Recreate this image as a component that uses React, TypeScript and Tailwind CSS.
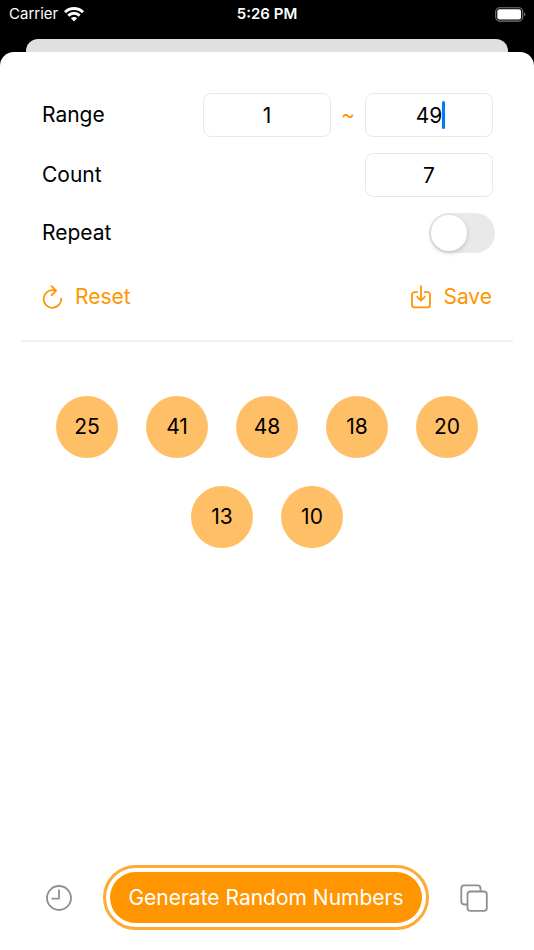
import { useState } from "react";

const INITIAL = [25, 41, 48, 18, 20, 13, 10];

const fieldClass =
  "h-11 w-32 rounded-lg border border-[#e8e8ea] bg-white text-center text-[21px] leading-7 text-black outline-none";

function WifiIcon() {
  return (
    <svg width="20" height="15" viewBox="0 0 20 15" fill="none" stroke="#fff" strokeWidth="2.9" aria-hidden="true">
      <path d="M1 5.2a12.8 12.8 0 0 1 18 0" />
      <path d="M4.3 8.6a8.1 8.1 0 0 1 11.4 0" />
      <path d="M10 14.5 6.9 11.3a4.4 4.4 0 0 1 6.2 0z" fill="#fff" stroke="none" />
    </svg>
  );
}

function BatteryIcon() {
  return (
    <svg width="31" height="15" viewBox="0 0 31 15" fill="none" aria-hidden="true">
      <rect x="0.7" y="0.7" width="27" height="13.4" rx="4" stroke="#7a7a7a" strokeWidth="1.1" />
      <rect x="2.3" y="2.3" width="23.8" height="10.2" rx="2.2" fill="#fff" />
      <path d="M29.2 5.2c1.7.7 1.7 3.7 0 4.4z" fill="#7a7a7a" />
    </svg>
  );
}

function ResetIcon() {
  return (
    <svg width="21" height="24" viewBox="0 0 21 24" fill="none" stroke="currentColor" strokeWidth="1.8" strokeLinecap="round" strokeLinejoin="round" aria-hidden="true">
      <path d="M19.2 13.6a8.8 8.8 0 1 1-8.8-8.400c1.200 0 2.300.1 3.200.4" />
      <path d="M9.600 1.200 14 5.600 9.600 10.300" />
    </svg>
  );
}

function SaveIcon() {
  return (
    <svg width="20" height="24" viewBox="0 0 20 24" fill="none" stroke="currentColor" strokeWidth="1.8" strokeLinecap="round" strokeLinejoin="round" aria-hidden="true">
      <path d="M6.2 7.1H3.6A2.6 2.6 0 0 0 1 9.7v10a2.6 2.6 0 0 0 2.6 2.6h12.8a2.6 2.6 0 0 0 2.6-2.6v-10a2.6 2.6 0 0 0-2.6-2.6h-2.6" />
      <path d="M10 1.2v14.2M6.2 11.8 10 15.6l3.8-3.8" />
    </svg>
  );
}

function ClockIcon() {
  return (
    <svg width="26" height="26" viewBox="0 0 26 26" fill="none" stroke="#8e8e93" strokeWidth="1.8" strokeLinecap="round" strokeLinejoin="round" aria-hidden="true">
      <circle cx="13" cy="13" r="12" />
      <path d="M13 5.200v8.400H6.200" />
    </svg>
  );
}

function CopyIcon() {
  return (
    <svg width="28" height="28" viewBox="0 0 28 28" fill="none" stroke="#8e8e93" strokeWidth="1.8" strokeLinejoin="round" aria-hidden="true">
      <path d="M7.5 20.5H4.2a2.9 2.9 0 0 1-2.900-2.900V4.200A2.900 2.900 0 0 1 4.200 1.300h13.400a2.900 2.900 0 0 1 2.900 2.900v3.300" />
      <rect x="7.5" y="7.5" width="19.3" height="19.3" rx="2.9" />
    </svg>
  );
}

export default function App() {
  const [min, setMin] = useState("1");
  const [max, setMax] = useState("49");
  const [count, setCount] = useState("7");
  const [repeat, setRepeat] = useState(false);
  const [numbers, setNumbers] = useState(INITIAL);

  const generate = () => {
    const low = Number(min);
    const high = Number(max);
    const total = Number(count);
    const pool = Array.from({ length: Math.max(0, high - low + 1) }, (_, i) => low + i);
    const picked: number[] = [];
    while (picked.length < total && pool.length > 0) {
      const i = Math.floor(Math.random() * pool.length);
      picked.push(pool[i]);
      if (!repeat) pool.splice(i, 1);
    }
    setNumbers(picked);
  };

  const reset = () => {
    setMin("1");
    setMax("49");
    setCount("7");
    setRepeat(false);
  };

  return (
    <div className="flex min-h-screen flex-col bg-black font-['Inter','Liberation_Sans',sans-serif] text-[21px] leading-7 text-black">
      <header className="grid h-[39px] grid-cols-3 items-start px-2 pt-1 text-[15px] leading-5 text-white">
        <div className="flex items-center gap-1.5 pl-px">
          <span>Carrier</span>
          <WifiIcon />
        </div>
        <div className="text-center font-semibold">5:26 PM</div>
        <div className="flex h-5 items-center justify-end">
          <BatteryIcon />
        </div>
      </header>
      <div className="mx-[26px] h-[13px] rounded-t-xl bg-[#e0e0e0]" />

      <main className="flex grow flex-col rounded-t-[14px] bg-white px-[21px] pt-[41px] pb-5">
        <section className="flex flex-col gap-4 pr-5 pl-[21px]">
          <div className="flex items-center justify-between">
            <label htmlFor="max">Range</label>
            <div className="flex items-center">
              <input
                className={fieldClass}
                aria-label="Minimum"
                inputMode="numeric"
                value={min}
                onChange={(e) => setMin(e.target.value)}
              />
              <span className="w-[34px] text-center text-[#ff9500]">~</span>
              <div className="relative">
                <input
                  id="max"
                  className={`${fieldClass} caret-transparent`}
                  inputMode="numeric"
                  value={max}
                  onChange={(e) => setMax(e.target.value)}
                />
                <span className="pointer-events-none absolute inset-0 flex items-center justify-center">
                  <span className="invisible">{max}</span>
                  <span className="-mr-[3px] h-7 w-[3px] rounded-full bg-[#007aff]" />
                </span>
              </div>
            </div>
          </div>
          <div className="flex items-center justify-between">
            <label htmlFor="count">Count</label>
            <input
              id="count"
              className={fieldClass}
              inputMode="numeric"
              value={count}
              onChange={(e) => setCount(e.target.value)}
            />
          </div>
          <div className="flex items-center justify-between">
            <label htmlFor="repeat">Repeat</label>
            <input
              id="repeat"
              type="checkbox"
              role="switch"
              checked={repeat}
              onChange={(e) => setRepeat(e.target.checked)}
              className="-mr-0.5 flex h-10 w-[66px] appearance-none items-center rounded-full bg-[#e9e9eb] px-0.5 before:size-9 before:rounded-full before:bg-white before:shadow-[0_2px_5px_rgba(0,0,0,0.16)] before:content-[''] checked:justify-end checked:bg-[#34c759]"
            />
          </div>
        </section>

        <div className="mt-[30px] flex items-center justify-between px-[21px] text-[#ff9500]">
          <button type="button" onClick={reset} className="flex items-center gap-3">
            <ResetIcon />
            Reset
          </button>
          <button type="button" className="flex items-center gap-3">
            <SaveIcon />
            Save
          </button>
        </div>

        <hr className="mt-[29px] border-t-2 border-[#f0f0f0]" />

        <ul className="mx-auto mt-[54px] flex max-w-[422px] flex-wrap justify-center gap-7">
          {numbers.map((n, i) => (
            <li key={i} className="flex size-[62px] items-center justify-center rounded-full bg-[#ffbf66]">
              {n}
            </li>
          ))}
        </ul>

        <footer className="mt-auto flex items-center justify-between px-[25px]">
          <button type="button" aria-label="History">
            <ClockIcon />
          </button>
          <button
            type="button"
            onClick={generate}
            className="rounded-full border-3 border-[#ffaa33] p-1 text-white"
          >
            <span className="flex h-[51px] items-center rounded-full bg-[#ff9500] px-[18px]">
              Generate Random Numbers
            </span>
          </button>
          <button type="button" aria-label="Copy">
            <CopyIcon />
          </button>
        </footer>
      </main>
    </div>
  );
}
